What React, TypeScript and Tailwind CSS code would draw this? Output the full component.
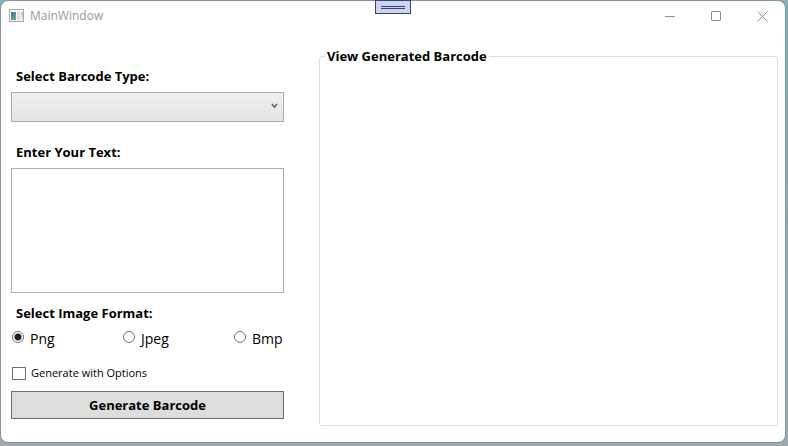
import { useState } from "react";

const formats = ["Png", "Jpeg", "Bmp"];

function AppIcon() {
  return (
    <svg width="16" height="14" viewBox="0 0 16 14" aria-hidden="true">
      <defs>
        <linearGradient id="pane" x1="0" y1="0" x2="1" y2="1">
          <stop offset="0" stopColor="#4a78a0" />
          <stop offset="1" stopColor="#5fae8c" />
        </linearGradient>
        <linearGradient id="side" x1="0" y1="0" x2="0" y2="1">
          <stop offset="0" stopColor="#b9c4cc" />
          <stop offset="1" stopColor="#e9edef" />
        </linearGradient>
      </defs>
      <rect x="0.5" y="0.5" width="14" height="12" fill="#f4f6f7" stroke="#a3a9ad" />
      <rect x="2" y="3" width="5" height="8" fill="url(#pane)" />
      <rect x="8" y="3" width="3" height="8" fill="#d9e1e5" />
      <rect x="12" y="3" width="2" height="8" fill="url(#side)" />
    </svg>
  );
}

function TitleBar() {
  return (
    <header className="flex h-[30px] items-center justify-between pl-2">
      <div className="flex items-center gap-[5px]">
        <AppIcon />
        <span className="text-[12px] leading-4 text-[#999999]">MainWindow</span>
      </div>
      <div className="flex">
        <button aria-label="Minimize" className="flex h-7 w-[46px] items-center justify-center">
          <svg width="11" height="11" viewBox="0 0 11 11" fill="none" stroke="#8f8f8f">
            <path d="M0 5.5H10" />
          </svg>
        </button>
        <button aria-label="Maximize" className="flex h-7 w-[46px] items-center justify-center">
          <svg width="11" height="11" viewBox="0 0 11 11" fill="none" stroke="#8f8f8f">
            <rect x="0.5" y="0.5" width="9" height="9" rx="0.5" />
          </svg>
        </button>
        <button aria-label="Close" className="flex h-7 w-[46px] items-center justify-center">
          <svg width="11" height="11" viewBox="0 0 11 11" fill="none" stroke="#8f8f8f">
            <path d="M0.5 0.5L10.5 10.5M10.5 0.5L0.5 10.5" />
          </svg>
        </button>
      </div>
    </header>
  );
}

export default function App() {
  const [format, setFormat] = useState("Png");
  const [text, setText] = useState("");

  return (
    <div className="flex min-h-screen bg-linear-to-b from-[#7fb0c4] to-[#9eaaad] pr-[2px] pb-[3px] font-['Open_Sans','Noto_Sans',sans-serif] text-black">
      <div className="relative flex flex-1 flex-col rounded-lg border border-[#84919a] bg-white">
        <TitleBar />

        {/* Debug toolbar handle */}
        <button
          aria-label="Show toolbar"
          className="absolute -top-px left-1/2 flex h-[14px] w-9 -translate-x-1/2 flex-col items-center justify-center gap-px border border-[#3f4270] bg-[#ccd5f0]"
        >
          <span className="h-px w-6 bg-[#3f4270]" />
          <span className="h-px w-6 bg-[#3f4270]" />
        </button>

        <main className="flex flex-1 gap-[35px] pt-[15px] pr-[7px] pb-4 pl-[10px]">
          {/* Settings */}
          <form className="flex w-[273px] flex-col pt-5" onSubmit={(e) => e.preventDefault()}>
            <label htmlFor="type" className="pl-[5px] text-[13px] leading-5 font-bold">
              Select Barcode Type:
            </label>
            <div className="relative mt-[6px]">
              <select
                id="type"
                className="block h-[30px] w-full appearance-none border border-[#acacac] bg-linear-to-b from-[#f0f0f0] to-[#e4e4e4] px-2 text-[13px]"
              />
              <svg
                className="pointer-events-none absolute top-[11px] right-[6px]"
                width="7"
                height="6"
                viewBox="0 0 7 6"
                fill="none"
                stroke="#606060"
                strokeWidth="1.5"
              >
                <path d="M1 1L3.5 4.2L6 1" />
              </svg>
            </div>

            <label htmlFor="text" className="mt-5 pl-[5px] text-[13px] leading-5 font-bold">
              Enter Your Text:
            </label>
            <textarea
              id="text"
              value={text}
              onChange={(e) => setText(e.target.value)}
              className="mt-[6px] block h-[125px] w-full resize-none border border-[#abadb3] bg-white p-1 text-[13px]"
            />

            <fieldset className="mt-[10px]">
              <legend className="pl-[5px] text-[13px] leading-5 font-bold">Select Image Format:</legend>
              <div className="flex pt-[6px] pl-px">
                {formats.map((item) => (
                  <label key={item} className="flex w-[111px] shrink-0 items-start gap-[6px] text-[14px] leading-5 last:w-auto">
                    <input
                      type="radio"
                      name="format"
                      checked={format === item}
                      onChange={() => setFormat(item)}
                      className="mt-[2px] h-3 w-3 appearance-none rounded-full border border-[#707070] bg-white checked:bg-[radial-gradient(circle,#212121_3px,white_4px)]"
                    />
                    {item}
                  </label>
                ))}
              </div>
            </fieldset>

            <label className="mt-[14px] flex items-center gap-[5px] pl-px text-[11px] leading-5">
              <input
                type="checkbox"
                className="h-[13px] w-[14px] appearance-none border border-[#707070] bg-white checked:bg-[#212121]"
              />
              Generate with Options
            </label>

            <button
              type="submit"
              className="mt-2 h-7 border border-[#707070] bg-[#dddddd] text-[13px] leading-5 font-bold"
            >
              Generate Barcode
            </button>
          </form>

          {/* Result */}
          <fieldset className="min-w-0 flex-1 rounded-[3px] border border-[#d5dfe5] pl-[5px]">
            <legend className="px-[2px] text-[13px] leading-5 font-bold">View Generated Barcode</legend>
          </fieldset>
        </main>
      </div>
    </div>
  );
}
